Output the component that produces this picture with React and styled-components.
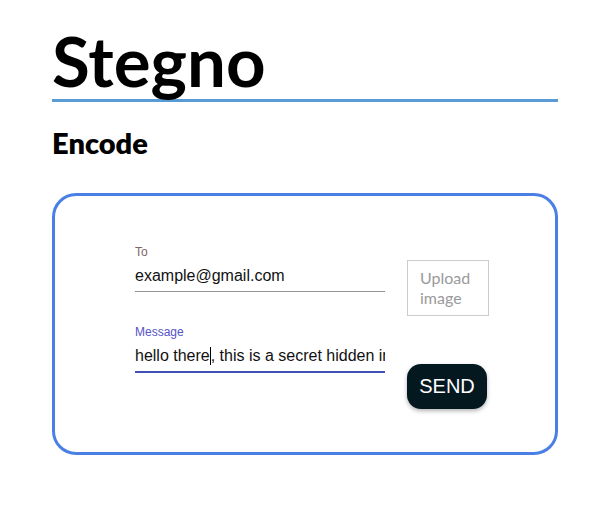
import React from 'react';
import styled, { createGlobalStyle } from 'styled-components';

const GlobalStyle = createGlobalStyle`
  body {
    margin: 0;
    background: #fff;
    font-family: "Liberation Sans", Arial, sans-serif;
  }
`;

const Page = styled.div`
  padding: 27px 0 40px 52px;
  width: 506px;
`;

const Title = styled.h1`
  margin: 0;
  font-family: Lato, "Open Sans", sans-serif;
  font-weight: 700;
  font-size: 69px;
  line-height: 68px;
  color: #000;
  padding-bottom: 4px;
  border-bottom: 3px solid #5b9bd5;
`;

const Subtitle = styled.h2`
  margin: 26px 0 0;
  font-family: Lato, "Open Sans", sans-serif;
  font-weight: 800;
  font-size: 29px;
  line-height: 29px;
  color: #000;
`;

const Card = styled.div`
  margin-top: 36px;
  border: 3px solid #4a80e6;
  border-radius: 24px;
  padding: 51px 0 43px 80px;
  display: grid;
  grid-template-columns: 250px 82px;
  column-gap: 22px;
`;

const Fields = styled.div`
  display: flex;
  flex-direction: column;
  gap: 35px;
`;

const Field = styled.div`
  display: flex;
  flex-direction: column;
`;

const Label = styled.div`
  font-size: 12px;
  line-height: 10px;
  height: 16px;
  color: ${(p) => (p.focused ? '#5553c6' : '#80636b')};
`;

const InputText = styled.div`
  font-size: 16px;
  line-height: 19px;
  padding: 3px 0 6px;
  color: #111;
  white-space: nowrap;
  overflow: hidden;
  border-bottom: ${(p) => (p.focused ? '2px solid #3f51b5' : '1px solid #949494')};
`;

const Caret = styled.span`
  display: inline-block;
  width: 1px;
  height: 18px;
  background: #000;
  vertical-align: -4px;
`;

const Side = styled.div`
  display: flex;
  flex-direction: column;
  align-items: flex-start;
`;

const Upload = styled.div`
  margin-top: 13px;
  width: 82px;
  box-sizing: border-box;
  border: 1px solid #cccccc;
  padding: 7px 12px 7px;
  font-family: Lato, "Open Sans", sans-serif;
  font-size: 16px;
  line-height: 20px;
  color: #9a9a9a;
`;

const SendButton = styled.button`
  margin-top: 48px;
  width: 80px;
  height: 45px;
  border: none;
  border-radius: 14px;
  background: #041820;
  color: #fff;
  font-family: "Liberation Sans", Arial, sans-serif;
  font-size: 20px;
  padding: 0;
  box-shadow: 0 2px 4px rgba(0, 0, 0, 0.3);
`;

export default function App() {
  return (
    <>
      <GlobalStyle />
      <Page>
        <Title>Stegno</Title>
        <Subtitle>Encode</Subtitle>
        <Card>
          <Fields>
            <Field>
              <Label>To</Label>
              <InputText>example@gmail.com</InputText>
            </Field>
            <Field>
              <Label focused>Message</Label>
              <InputText focused>
                hello there<Caret />, this is a secret hidden image
              </InputText>
            </Field>
          </Fields>
          <Side>
            <Upload>Upload image</Upload>
            <SendButton>SEND</SendButton>
          </Side>
        </Card>
      </Page>
    </>
  );
}
